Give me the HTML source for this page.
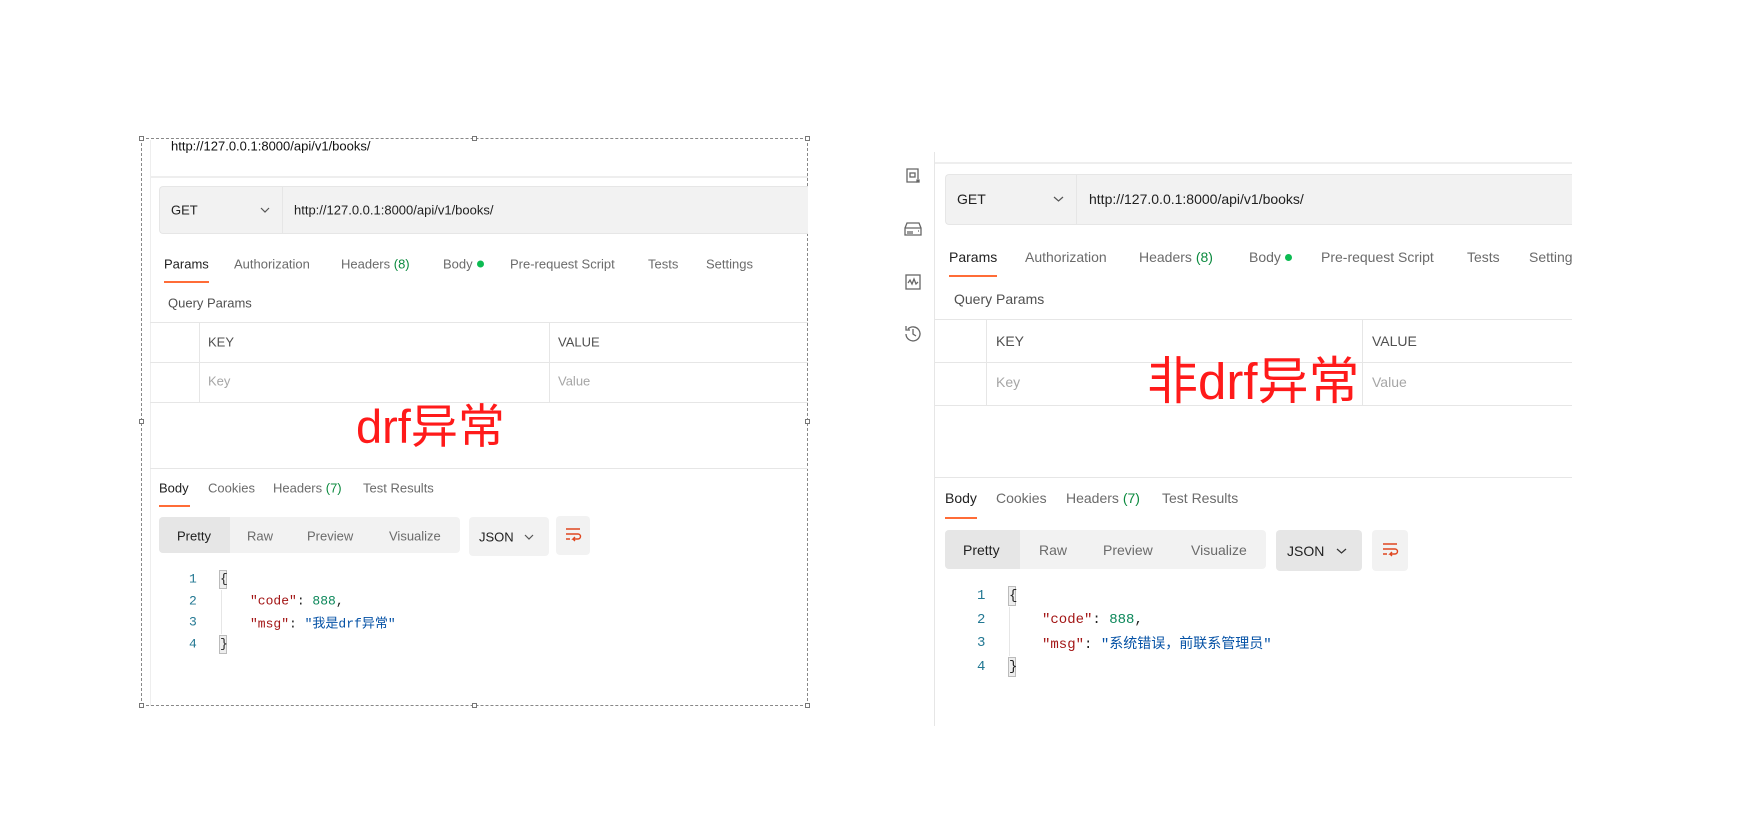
<!DOCTYPE html>
<html><head><meta charset="utf-8"><style>
*{margin:0;padding:0;box-sizing:border-box}
body{width:1740px;height:824px;background:#fff;position:relative;overflow:hidden;font-family:"Liberation Sans","Noto Sans CJK SC",sans-serif;color:#212121}
.a{position:absolute;white-space:nowrap}
.t{font-size:13px;color:#6b6b6b;transform:translateY(-50%)}
.t2{font-size:14px;color:#6b6b6b;transform:translateY(-50%)}
.hl{position:absolute;height:1px;background:#e6e6e6}
.vl{position:absolute;width:1px;background:#e6e6e6}
.g{color:#0b8a3e}
.dot{display:inline-block;width:7px;height:7px;border-radius:50%;background:#0cbb52;margin-left:4px;vertical-align:1px}
.mono{font-family:"Liberation Mono","Noto Sans CJK SC",monospace;font-size:13px;transform:translateY(-50%)}
.k{color:#a31515}.n{color:#098658}.s{color:#0451a5}.ln{color:#237893}
.red{color:#ff1a1a;font-family:"Liberation Sans","Noto Sans CJK SC",sans-serif}
.hd{position:absolute;width:5px;height:5px;border:1px solid #777;background:#fff}
</style></head><body>

<!-- LEFT -->
<div class="a" style="left:141px;top:138px;width:667px;height:568px;border:1px dashed #888"></div>
<div class="hd" style="left:139px;top:136px"></div><div class="hd" style="left:472px;top:136px"></div><div class="hd" style="left:805px;top:136px"></div>
<div class="hd" style="left:139px;top:419px"></div><div class="hd" style="left:805px;top:419px"></div>
<div class="hd" style="left:139px;top:703px"></div><div class="hd" style="left:472px;top:703px"></div><div class="hd" style="left:805px;top:703px"></div>
<div class="vl" style="left:150px;top:140px;height:566px;background:#eee"></div>
<div class="a t" style="left:171px;top:146px;color:#111">http://127.0.0.1:8000/api/v1/books/</div>
<div class="hl" style="left:150px;top:176px;width:658px;height:2px;background:#eee"></div>
<div class="a" style="left:159px;top:186px;width:649px;height:48px;background:#f2f2f2;border:1px solid #e6e6e6;border-right:none;border-radius:4px 0 0 4px"></div>
<div class="vl" style="left:282px;top:187px;height:46px"></div>
<div class="a t" style="left:171px;top:210px;color:#212121">GET</div>
<svg class="a" style="left:260px;top:206px" width="10" height="8" viewBox="0 0 10 8" fill="none" stroke="#555" stroke-width="1.2"><path d="M1 2l4 4 4-4"/></svg>
<div class="a t" style="left:294px;top:210px;color:#212121">http://127.0.0.1:8000/api/v1/books/</div>
<div class="a t" style="left:164px;top:264px;color:#212121">Params</div>
<div class="a t" style="left:234px;top:264px">Authorization</div>
<div class="a t" style="left:341px;top:264px">Headers <span class="g">(8)</span></div>
<div class="a t" style="left:443px;top:264px">Body<span class="dot"></span></div>
<div class="a t" style="left:510px;top:264px">Pre-request Script</div>
<div class="a t" style="left:648px;top:264px">Tests</div>
<div class="a t" style="left:706px;top:264px">Settings</div>
<div class="a" style="left:164px;top:281px;width:45px;height:2px;background:#ff6c37"></div>
<div class="a t" style="left:168px;top:303px;color:#505050">Query Params</div>
<div class="hl" style="left:150px;top:322px;width:658px"></div>
<div class="hl" style="left:150px;top:362px;width:658px"></div>
<div class="hl" style="left:150px;top:402px;width:658px"></div>
<div class="vl" style="left:199px;top:322px;height:80px"></div>
<div class="vl" style="left:549px;top:322px;height:80px"></div>
<div class="a t" style="left:208px;top:342px;color:#505050">KEY</div>
<div class="a t" style="left:558px;top:342px;color:#505050">VALUE</div>
<div class="a t" style="left:208px;top:381px;color:#a6a6a6">Key</div>
<div class="a t" style="left:558px;top:381px;color:#a6a6a6">Value</div>
<div class="a red" style="left:356px;top:399px;font-size:47px;line-height:56px">drf异常</div>
<div class="hl" style="left:150px;top:468px;width:658px"></div>
<div class="a t" style="left:159px;top:488px;color:#212121">Body</div>
<div class="a t" style="left:208px;top:488px">Cookies</div>
<div class="a t" style="left:273px;top:488px">Headers <span class="g">(7)</span></div>
<div class="a t" style="left:363px;top:488px">Test Results</div>
<div class="a" style="left:159px;top:505px;width:31px;height:2px;background:#ff6c37"></div>
<div class="a" style="left:159px;top:517px;width:301px;height:36px;background:#f2f2f2;border-radius:4px"></div>
<div class="a" style="left:159px;top:517px;width:71px;height:36px;background:#e6e6e6;border-radius:4px 0 0 4px"></div>
<div class="a t" style="left:177px;top:536px;color:#212121">Pretty</div>
<div class="a t" style="left:247px;top:536px">Raw</div>
<div class="a t" style="left:307px;top:536px">Preview</div>
<div class="a t" style="left:389px;top:536px">Visualize</div>
<div class="a" style="left:469px;top:517px;width:80px;height:39px;background:#f2f2f2;border-radius:4px"></div>
<div class="a t" style="left:479px;top:537px;color:#212121;font-size:13px">JSON</div>
<svg class="a" style="left:524px;top:533px" width="10" height="8" viewBox="0 0 10 8" fill="none" stroke="#555" stroke-width="1.2"><path d="M1 2l4 4 4-4"/></svg>
<div class="a" style="left:556px;top:516px;width:34px;height:39px;background:#f2f2f2;border-radius:4px"></div>
<svg class="a" style="left:564px;top:526px" width="18" height="18" viewBox="0 0 18 18" fill="none" stroke="#e0461f" stroke-width="1.4"><path d="M2 3h14M2 8h12a2.5 2.5 0 0 1 0 5H9l2-2M9 13l2 2M2 13h4"/></svg>
<div class="a mono ln" style="left:189px;top:579px">1</div>
<div class="a mono ln" style="left:189px;top:601px">2</div>
<div class="a mono ln" style="left:189px;top:622px">3</div>
<div class="a mono ln" style="left:189px;top:644px">4</div>
<div class="a" style="left:219px;top:570px;width:8px;height:19px;border:1px solid #bbb;background:#eee"></div>
<div class="a mono" style="left:220px;top:579px">{</div>
<div class="vl" style="left:221px;top:590px;height:44px"></div>
<div class="a" style="left:219px;top:635px;width:8px;height:19px;border:1px solid #bbb;background:#eee"></div>
<div class="a mono" style="left:220px;top:644px">}</div>
<div class="a mono" style="left:250px;top:601px"><span class="k">"code"</span>: <span class="n">888</span>,</div>
<div class="a mono" style="left:250px;top:622px"><span class="k">"msg"</span>: <span class="s">"我是drf异常"</span></div>

<!-- RIGHT -->
<div class="vl" style="left:934px;top:152px;height:574px"></div>
<div class="hl" style="left:935px;top:162px;width:637px;height:2px;background:#eee"></div>
<svg class="a" style="left:904px;top:167px" width="18" height="18" viewBox="0 0 18 18" fill="none" stroke="#666" stroke-width="1.3"><path d="M13 15H3V2h11v10"/><rect x="6" y="6" width="5" height="4"/><rect x="13" y="13" width="2" height="2" fill="#666"/></svg>
<svg class="a" style="left:903px;top:220px" width="20" height="18" viewBox="0 0 20 18" fill="none" stroke="#666" stroke-width="1.3"><path d="M2 8l2-5h12l2 5v7H2z M2 8h16M5 11v3M7 11v3M9 11v3M15 11h1"/></svg>
<svg class="a" style="left:904px;top:273px" width="18" height="18" viewBox="0 0 18 18" fill="none" stroke="#666" stroke-width="1.3"><rect x="2" y="2" width="14" height="14"/><path d="M4 10l2-3 2 4 2-5 2 5 2-2"/></svg>
<svg class="a" style="left:903px;top:323px" width="20" height="20" viewBox="0 0 20 20" fill="none" stroke="#666" stroke-width="1.3"><path d="M3 11a7 7 0 1 0 2-5M3 3v4h4M10 6v5l3 2"/></svg>
<div class="a" style="left:945px;top:174px;width:627px;height:51px;background:#f2f2f2;border:1px solid #e6e6e6;border-right:none;border-radius:4px 0 0 4px"></div>
<div class="vl" style="left:1076px;top:175px;height:49px"></div>
<div class="a t2" style="left:957px;top:199px;color:#212121">GET</div>
<svg class="a" style="left:1053px;top:195px" width="11" height="8" viewBox="0 0 11 8" fill="none" stroke="#555" stroke-width="1.2"><path d="M1 2l4.5 4 4.5-4"/></svg>
<div class="a t2" style="left:1089px;top:199px;color:#212121">http://127.0.0.1:8000/api/v1/books/</div>
<div class="a" style="left:935px;top:240px;width:637px;height:40px;overflow:hidden">
<div class="a t2" style="left:14px;top:17px;color:#212121">Params</div>
<div class="a t2" style="left:90px;top:17px">Authorization</div>
<div class="a t2" style="left:204px;top:17px">Headers <span class="g">(8)</span></div>
<div class="a t2" style="left:314px;top:17px">Body<span class="dot"></span></div>
<div class="a t2" style="left:386px;top:17px">Pre-request Script</div>
<div class="a t2" style="left:532px;top:17px">Tests</div>
<div class="a t2" style="left:594px;top:17px">Settings</div>
</div>
<div class="a" style="left:949px;top:275px;width:48px;height:2px;background:#ff6c37"></div>
<div class="a t2" style="left:954px;top:299px;color:#505050">Query Params</div>
<div class="hl" style="left:935px;top:319px;width:637px"></div>
<div class="hl" style="left:935px;top:362px;width:637px"></div>
<div class="hl" style="left:935px;top:405px;width:637px"></div>
<div class="vl" style="left:986px;top:319px;height:86px"></div>
<div class="vl" style="left:1362px;top:319px;height:86px"></div>
<div class="a t2" style="left:996px;top:341px;color:#505050">KEY</div>
<div class="a t2" style="left:1372px;top:341px;color:#505050">VALUE</div>
<div class="a t2" style="left:996px;top:382px;color:#a6a6a6">Key</div>
<div class="a t2" style="left:1372px;top:382px;color:#a6a6a6">Value</div>
<div class="a red" style="left:1147px;top:352px;font-size:51px;line-height:60px">非drf异常</div>
<div class="hl" style="left:935px;top:477px;width:637px"></div>
<div class="a t2" style="left:945px;top:498px;color:#212121">Body</div>
<div class="a t2" style="left:996px;top:498px">Cookies</div>
<div class="a t2" style="left:1066px;top:498px">Headers <span class="g">(7)</span></div>
<div class="a t2" style="left:1162px;top:498px">Test Results</div>
<div class="a" style="left:945px;top:517px;width:32px;height:2px;background:#ff6c37"></div>
<div class="a" style="left:945px;top:530px;width:321px;height:39px;background:#f2f2f2;border-radius:4px"></div>
<div class="a" style="left:945px;top:530px;width:75px;height:39px;background:#e6e6e6;border-radius:4px 0 0 4px"></div>
<div class="a t2" style="left:963px;top:550px;color:#212121">Pretty</div>
<div class="a t2" style="left:1039px;top:550px">Raw</div>
<div class="a t2" style="left:1103px;top:550px">Preview</div>
<div class="a t2" style="left:1191px;top:550px">Visualize</div>
<div class="a" style="left:1276px;top:530px;width:86px;height:41px;background:#e6e6e6;border-radius:4px"></div>
<div class="a t2" style="left:1287px;top:551px;color:#212121">JSON</div>
<svg class="a" style="left:1336px;top:547px" width="11" height="8" viewBox="0 0 11 8" fill="none" stroke="#333" stroke-width="1.2"><path d="M1 2l4.5 4 4.5-4"/></svg>
<div class="a" style="left:1372px;top:530px;width:36px;height:41px;background:#f2f2f2;border-radius:4px"></div>
<svg class="a" style="left:1381px;top:541px" width="18" height="18" viewBox="0 0 18 18" fill="none" stroke="#e0461f" stroke-width="1.4"><path d="M2 3h14M2 8h12a2.5 2.5 0 0 1 0 5H9l2-2M9 13l2 2M2 13h4"/></svg>
<div class="a mono ln" style="left:977px;top:596px;font-size:14px">1</div>
<div class="a mono ln" style="left:977px;top:620px;font-size:14px">2</div>
<div class="a mono ln" style="left:977px;top:643px;font-size:14px">3</div>
<div class="a mono ln" style="left:977px;top:667px;font-size:14px">4</div>
<div class="a" style="left:1008px;top:586px;width:8px;height:20px;border:1px solid #bbb;background:#eee"></div>
<div class="a mono" style="left:1009px;top:596px;font-size:14px">{</div>
<div class="vl" style="left:1009px;top:607px;height:49px"></div>
<div class="a" style="left:1008px;top:657px;width:8px;height:20px;border:1px solid #bbb;background:#eee"></div>
<div class="a mono" style="left:1009px;top:667px;font-size:14px">}</div>
<div class="a mono" style="left:1042px;top:620px;font-size:14px"><span class="k">"code"</span>: <span class="n">888</span>,</div>
<div class="a mono" style="left:1042px;top:643px;font-size:14px"><span class="k">"msg"</span>: <span class="s">"系统错误，前联系管理员"</span></div>
</body></html>
